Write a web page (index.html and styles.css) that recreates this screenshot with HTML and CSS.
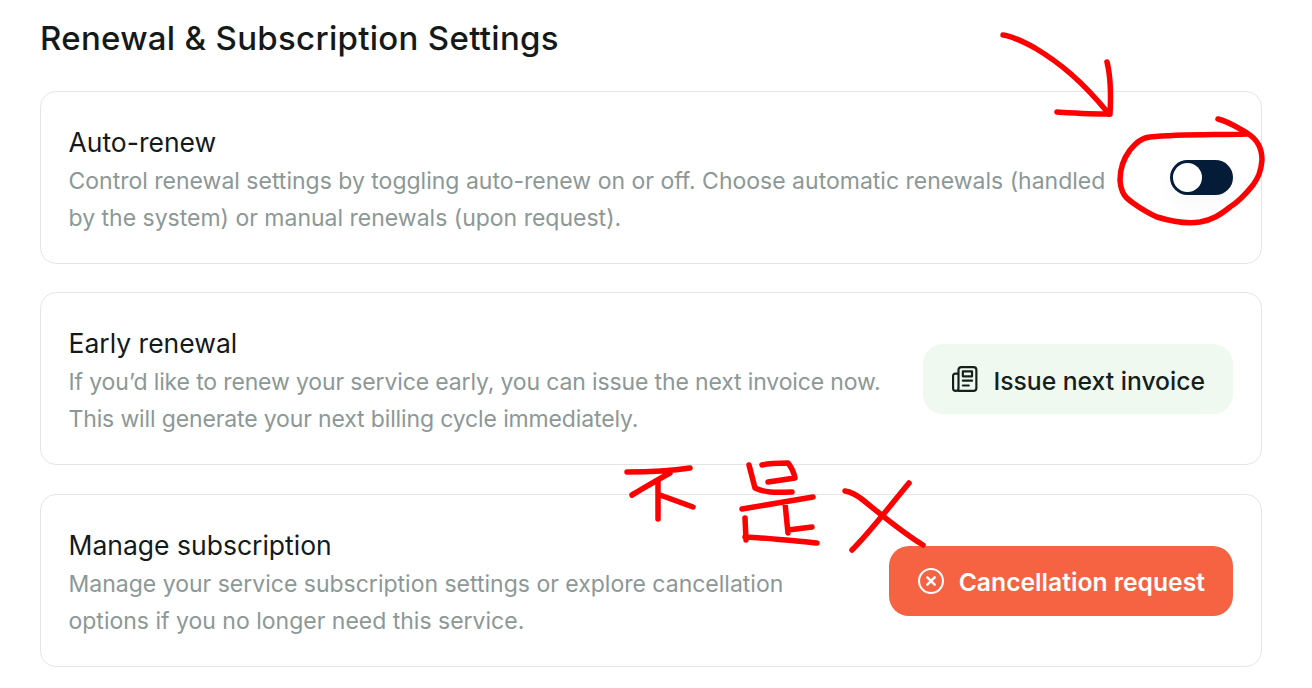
FILE: index.html
```html
<!DOCTYPE html>
<html lang="en">
<head>
    <meta charset="UTF-8">
    <title>Renewal &amp; Subscription Settings</title>
    <link rel="stylesheet" href="styles.css">
</head>
<body>

<div class="container">
    <h1>Renewal &amp; Subscription Settings</h1>

    <div class="card">
        <div class="card-text">
            <h3>Auto-renew</h3>
            <p>Control renewal settings by toggling auto-renew on or off. Choose automatic renewals (handled<br>by the system) or manual renewals (upon request).</p>
        </div>
        <div class="toggle"><span class="knob"></span></div>
    </div>

    <div class="card">
        <div class="card-text">
            <h3>Early renewal</h3>
            <p class="tight">If you’d like to renew your service early, you can issue the next invoice now.<br>This will generate your next billing cycle immediately.</p>
        </div>
        <button class="btn btn-invoice">
            <svg class="btn-icon" viewBox="1.5 0.5 24 24" fill="none" stroke="#14201c" stroke-width="2" stroke-linejoin="round" stroke-linecap="round">
                <path d="M7.5 23.5H21.5a2.5 2.5 0 0 0 2.5-2.5V4a2.5 2.5 0 0 0-2.5-2.5H10a2.5 2.5 0 0 0-2.5 2.5V21a2.5 2.5 0 0 1-5 0V9.5a2 2 0 0 1 2-2h3"/>
                <rect x="11.5" y="5.5" width="8.5" height="4.5"/>
                <path d="M11.5 14H20M11.5 18.5H17"/>
            </svg>
            <span class="btn-label">Issue next invoice</span>
        </button>
    </div>

    <div class="card">
        <div class="card-text">
            <h3>Manage subscription</h3>
            <p>Manage your service subscription settings or explore cancellation<br>options if you no longer need this service.</p>
        </div>
        <button class="btn btn-cancel">
            <svg class="btn-icon" viewBox="0.5 0.5 25 25" fill="none" stroke="#fff" stroke-width="2" stroke-linecap="round">
                <circle cx="13" cy="13" r="11.5"/>
                <path d="M9.5 9.5L16.5 16.5M16.5 9.5L9.5 16.5" stroke-width="2.4"/>
            </svg>
            <span class="btn-label">Cancellation request</span>
        </button>
    </div>
</div>

<!-- red pen marks drawn over the screenshot -->
<svg class="marks" viewBox="0 0 1312 688" fill="none" stroke="#fe0000" stroke-width="5.5" stroke-linecap="round" stroke-linejoin="round">
    <path d="M1003 35C1012 36 1022 41 1035 48C1060 63 1082 81 1109 114"/>
    <path d="M1107 62C1111 78 1111 96 1110 114C1092 114 1075 113 1057 112"/>
    <path d="M1218 119C1230 122 1238 128 1247 133C1257 139 1262 148 1262 160C1261 172 1258 178 1253 185C1245 195 1238 202 1230 207C1220 215 1212 220 1200 222C1186 224 1170 221 1157 217C1148 213 1140 208 1133 203C1126 198 1121 194 1120 180C1120 168 1124 158 1130 150C1136 143 1141 138 1150 137C1180 134 1215 135 1247 134"/>
    <path d="M627 472C648 472 670 471 690 468M670 473C657 480 644 488 632 495M658 482V519M660 495L693 507"/>
    <path d="M749 465L755 488C768 494 780 492 792 492M762 465C770 463 780 463 788 463C792 468 794 473 795 478L768 482M742 509C765 505 790 501 813 497M785 503L788 533M788 530L812 527M745 518L746 540M745 537C770 538 795 541 817 543"/>
    <path d="M845 491C852 492 858 496 863 500C884 517 903 533 923 545M909 483C885 512 870 532 852 550"/>
</svg>

</body>
</html>
```

FILE: styles.css
```css
body {
    font-family: Inter, "Liberation Sans", sans-serif;
    background: #fff;
    margin: 0;
    overflow: hidden;
}
h1 {
    margin: 0;
    font-size: 33px;
    line-height: 40px;
    font-weight: 500;
    letter-spacing: 0.3px;
    color: #14191a;
}
h3 {
    margin: 0 0 2px;
    font-size: 26.5px;
    line-height: 37px;
    font-weight: 400;
    color: #14191a;
}
p {
    margin: 0;
    font-size: 23px;
    line-height: 37px;
    color: #8c9897;
}
.tight {
    letter-spacing: -0.14px;
}
.container {
    width: 1222px;
    margin-left: 40px;
    padding-top: 18px;
}
.container h1 {
    margin-bottom: 33px;
}
.card {
    display: flex;
    justify-content: space-between;
    align-items: center;
    height: 173px;
    margin-bottom: 28.4px;
    padding: 0 28px 0 27.5px;
    box-sizing: border-box;
    border: 1px solid #e4e6e6;
    border-radius: 16px;
}
.card-text {
    padding-top: 6px;
}
.toggle {
    display: flex;
    align-items: center;
    width: 63px;
    height: 35px;
    padding: 3px;
    box-sizing: border-box;
    background: #051c38;
    border-radius: 18px;
    box-shadow: 0 10px 20px rgba(0,0,0,0.03);
}
.knob {
    width: 29px;
    height: 29px;
    background: #fff;
    border-radius: 50%;
}
.btn {
    display: flex;
    align-items: center;
    gap: 15px;
    height: 70px;
    padding: 0 28px 0 29px;
    border: none;
    border-radius: 20px;
    font-family: inherit;
    font-size: 24.7px;
    cursor: pointer;
}
.btn-label {
    padding-top: 4px;
}
.btn-icon {
    width: 26px;
    height: 26px;
}
.btn-invoice {
    background: #f0f9f0;
    color: #14201c;
    font-weight: 500;
}
.btn-cancel {
    margin-top: 1px;
    background: #f56342;
    color: #fff;
    font-weight: 600;
}
.btn-cancel .btn-label {
    padding-top: 2px;
}
.marks {
    position: absolute;
    top: 0;
    left: 0;
    width: 1312px;
    height: 688px;
    pointer-events: none;
}
```
